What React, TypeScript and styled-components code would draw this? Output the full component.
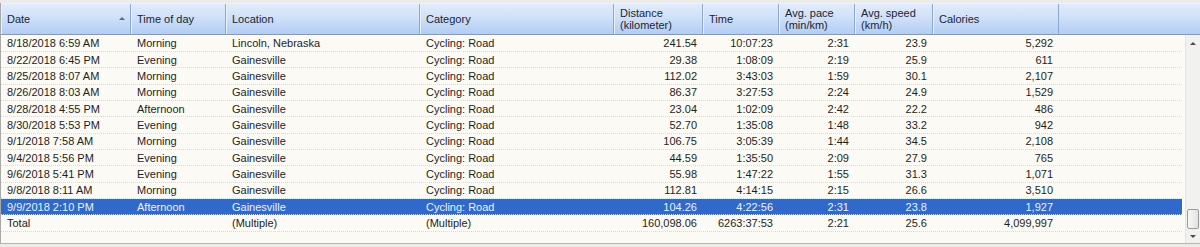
import React from "react";
import styled, { createGlobalStyle } from "styled-components";

type Align = "left" | "right";

interface Column {
  title: string[];
  width: number;
  align: Align;
  sorted?: boolean;
}

const columns: Column[] = [
  { title: ["Date"], width: 130, align: "left", sorted: true },
  { title: ["Time of day"], width: 95, align: "left" },
  { title: ["Location"], width: 194, align: "left" },
  { title: ["Category"], width: 194, align: "left" },
  { title: ["Distance", "(kilometer)"], width: 89, align: "right" },
  { title: ["Time"], width: 76, align: "right" },
  { title: ["Avg. pace", "(min/km)"], width: 76, align: "right" },
  { title: ["Avg. speed", "(km/h)"], width: 78, align: "right" },
  { title: ["Calories"], width: 126, align: "right" },
];

const rows: string[][] = [
  ["8/18/2018 6:59 AM", "Morning", "Lincoln, Nebraska", "Cycling: Road", "241.54", "10:07:23", "2:31", "23.9", "5,292"],
  ["8/22/2018 6:45 PM", "Evening", "Gainesville", "Cycling: Road", "29.38", "1:08:09", "2:19", "25.9", "611"],
  ["8/25/2018 8:07 AM", "Morning", "Gainesville", "Cycling: Road", "112.02", "3:43:03", "1:59", "30.1", "2,107"],
  ["8/26/2018 8:03 AM", "Morning", "Gainesville", "Cycling: Road", "86.37", "3:27:53", "2:24", "24.9", "1,529"],
  ["8/28/2018 4:55 PM", "Afternoon", "Gainesville", "Cycling: Road", "23.04", "1:02:09", "2:42", "22.2", "486"],
  ["8/30/2018 5:53 PM", "Evening", "Gainesville", "Cycling: Road", "52.70", "1:35:08", "1:48", "33.2", "942"],
  ["9/1/2018 7:58 AM", "Morning", "Gainesville", "Cycling: Road", "106.75", "3:05:39", "1:44", "34.5", "2,108"],
  ["9/4/2018 5:56 PM", "Evening", "Gainesville", "Cycling: Road", "44.59", "1:35:50", "2:09", "27.9", "765"],
  ["9/6/2018 5:41 PM", "Evening", "Gainesville", "Cycling: Road", "55.98", "1:47:22", "1:55", "31.3", "1,071"],
  ["9/8/2018 8:11 AM", "Morning", "Gainesville", "Cycling: Road", "112.81", "4:14:15", "2:15", "26.6", "3,510"],
  ["9/9/2018 2:10 PM", "Afternoon", "Gainesville", "Cycling: Road", "104.26", "4:22:56", "2:31", "23.8", "1,927"],
];

const total = ["Total", "", "(Multiple)", "(Multiple)", "160,098.06", "6263:37:53", "2:21", "25.6", "4,099,997"];

const SELECTED = 10;

const GlobalStyle = createGlobalStyle`
  html, body {
    margin: 0;
    padding: 0;
    background: #f0f0f0;
  }
  body {
    font-family: "Liberation Sans", Arial, sans-serif;
    font-size: 11px;
  }
`;

const Frame = styled.div`
  width: 1200px;
  height: 247px;
  padding-top: 3px;
  box-sizing: border-box;
  background: #ecebe8;
  overflow: hidden;
`;

const Grid = styled.div`
  height: 240px;
  display: flex;
  flex-direction: column;
  border-left: 1px solid #a9a9a9;
  border-bottom: 1px solid #b5b5b5;
  background: #fcfaf4;
`;

const HeaderRow = styled.div`
  display: flex;
  height: 32px;
  flex: none;
  box-sizing: border-box;
  background: linear-gradient(#e1ecfb 0%, #cfe0f8 45%, #b3cdf3 100%);
  border-top: 1px solid #eef4fd;
  border-bottom: 1px solid #7d9bc8;
`;

const HeaderCell = styled.div<{ $w: number }>`
  position: relative;
  width: ${({ $w }) => $w}px;
  flex: none;
  box-sizing: border-box;
  padding: 0 6px;
  display: flex;
  flex-direction: column;
  justify-content: center;
  border-right: 1px solid #8ea8cf;
  box-shadow: inset 1px 0 0 #e8f0fc;
  color: #1b2533;
  line-height: 12px;
`;

const HeaderFill = styled.div`
  flex: 1;
`;

const SortArrow = styled.span`
  position: absolute;
  right: 5px;
  top: 13px;
  width: 0;
  height: 0;
  border-left: 3px solid transparent;
  border-right: 3px solid transparent;
  border-bottom: 3px solid #5d6b80;
`;

const Body = styled.div`
  flex: 1;
  display: flex;
  min-height: 0;
`;

const RowList = styled.div`
  width: 1184px;
  flex: none;
  padding-top: 0.5px;
`;

const Row = styled.div<{ $selected?: boolean }>`
  display: flex;
  align-items: center;
  height: 16.35px;
  box-sizing: border-box;
  border-bottom: 1px dotted #dcd9d2;
  background: ${({ $selected }) => ($selected ? "#3069c9" : "transparent")};
  color: ${({ $selected }) => ($selected ? "#e9f1ff" : "#1e1e1e")};
  width: 1181px;
`;

const Cell = styled.div<{ $w: number; $align: Align }>`
  width: ${({ $w }) => $w}px;
  flex: none;
  box-sizing: border-box;
  padding: 0 6px;
  text-align: ${({ $align }) => $align};
  line-height: 14px;
  white-space: nowrap;
  overflow: hidden;
`;

const Scrollbar = styled.div`
  flex: 1;
  display: flex;
  flex-direction: column;
  background: #f1f1ef;
  border-left: 1px solid #e4e4e2;
`;

const ScrollButton = styled.div<{ $h: number }>`
  height: ${({ $h }) => $h}px;
  display: flex;
  align-items: center;
  justify-content: center;
  flex: none;
`;

const Track = styled.div`
  flex: 1;
  display: flex;
  flex-direction: column;
  justify-content: flex-end;
  padding: 0 1px;
`;

const Thumb = styled.div`
  height: 18px;
  border: 1px solid #9a9a9a;
  border-radius: 2px;
  background: linear-gradient(90deg, #f7f7f7, #e2e2e2);
`;

const Tri = styled.span<{ $down?: boolean }>`
  width: 0;
  height: 0;
  border-left: 3px solid transparent;
  border-right: 3px solid transparent;
  ${({ $down }) => ($down ? "border-top: 3px solid #4a4a4a;" : "border-bottom: 3px solid #4a4a4a;")}
`;

export default function App() {
  return (
    <Frame>
      <GlobalStyle />
      <Grid>
        <HeaderRow>
          {columns.map((c) => (
            <HeaderCell key={c.title[0]} $w={c.width}>
              {c.title.map((t) => (
                <span key={t}>{t}</span>
              ))}
              {c.sorted && <SortArrow />}
            </HeaderCell>
          ))}
          <HeaderFill />
        </HeaderRow>
        <Body>
          <RowList>
            {rows.map((r, i) => (
              <Row key={i} $selected={i === SELECTED}>
                {r.map((v, j) => (
                  <Cell key={j} $w={columns[j].width} $align={columns[j].align}>
                    {v}
                  </Cell>
                ))}
              </Row>
            ))}
            <Row>
              {total.map((v, j) => (
                <Cell key={j} $w={columns[j].width} $align={columns[j].align}>
                  {v}
                </Cell>
              ))}
            </Row>
          </RowList>
          <Scrollbar>
            <ScrollButton $h={17}>
              <Tri />
            </ScrollButton>
            <Track>
              <Thumb />
            </Track>
            <ScrollButton $h={14}>
              <Tri $down />
            </ScrollButton>
          </Scrollbar>
        </Body>
      </Grid>
    </Frame>
  );
}
